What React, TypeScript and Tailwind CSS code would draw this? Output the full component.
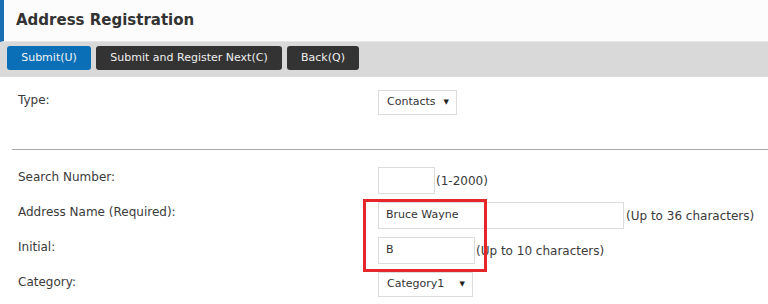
const font = { fontFamily: '"DejaVu Sans", Verdana, sans-serif' };

function FakeSelect({ value, width }: { value: string; width: string }) {
  return (
    <div
      className={`flex h-[25px] items-center justify-between border border-[#dcdcdc] bg-white pl-[8px] pr-[7px] text-[11px] text-[#333] ${width}`}
    >
      <span>{value}</span>
      <span className="text-[7px] leading-none text-[#222]">▼</span>
    </div>
  );
}

function Field({
  label,
  children,
}: {
  label: string;
  children: React.ReactNode;
}) {
  return (
    <div className="flex items-start">
      <div className="w-[360px] pt-[2px] leading-[16px]">{label}</div>
      <div className="flex items-center">{children}</div>
    </div>
  );
}

export default function App() {
  return (
    <div
      className="relative h-[304px] w-[768px] overflow-hidden bg-white text-[12px] text-[#3a3a3a]"
      style={font}
    >
      <div className="flex h-[42px] items-center border-b border-[#e6e6e6] border-l-4 border-l-[#1a6fb5] bg-[#fcfcfc] pl-[12px]">
        <h1 className="text-[15px] font-bold text-[#333]">Address Registration</h1>
      </div>

      <div className="flex h-[35px] items-start gap-[5px] bg-[#d9d9d9] px-[7px] pt-[4px]">
        <button className="h-[24px] w-[84px] rounded-[3px] bg-[#0b6fb7] text-[11px] text-[#f4f4f4]">
          Submit(U)
        </button>
        <button className="h-[24px] w-[186px] rounded-[3px] bg-[#333] text-[11px] text-[#f0f0f0]">
          Submit and Register Next(C)
        </button>
        <button className="h-[24px] w-[72px] rounded-[3px] bg-[#333] text-[11px] text-[#f0f0f0]">
          Back(Q)
        </button>
      </div>

      <div className="pl-[12px]">
        <div className="h-[72px] pl-[6px] pt-[13px]">
          <div className="flex items-start">
            <div className="w-[360px] pt-[2px] leading-[16px]">Type:</div>
            <FakeSelect value="Contacts" width="w-[79px]" />
          </div>
        </div>
        <div className="h-px bg-[#aaaaaa]" />

        <div className="flex flex-col gap-[8px] pl-[6px] pt-[17px]">
          <Field label="Search Number:">
            <div className="h-[27px] w-[57px] border border-[#dcdcdc] bg-white" />
            <span className="ml-[1px]">(1-2000)</span>
          </Field>
          <Field label="Address Name (Required):">
            <div className="flex h-[27px] w-[246px] items-center border border-[#dcdcdc] bg-white pl-[7px] text-[11px] text-[#333]">
              Bruce Wayne
            </div>
            <span className="ml-[2px]">(Up to 36 characters)</span>
          </Field>
          <Field label="Initial:">
            <div className="flex h-[27px] w-[97px] items-center border border-[#dcdcdc] bg-white pl-[7px] text-[11px] text-[#333]">
              B
            </div>
            <span className="ml-[1px]">(Up to 10 characters)</span>
          </Field>
          <Field label="Category:">
            <FakeSelect value="Category1" width="w-[95px]" />
          </Field>
        </div>
      </div>

      <div className="absolute left-[363px] top-[199px] h-[73px] w-[124px] border-[3px] border-[#e5262b]" />
    </div>
  );
}
